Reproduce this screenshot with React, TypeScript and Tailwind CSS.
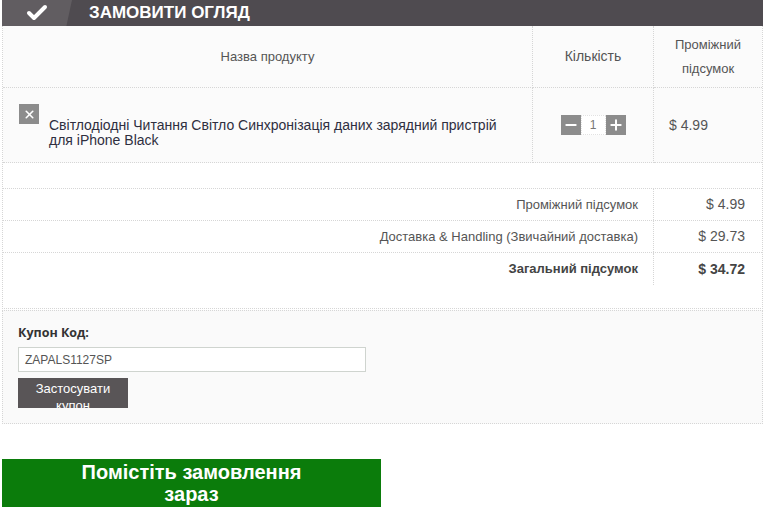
import { Check, Minus, Plus, X } from "lucide-react";

const totals = [
  { label: "Проміжний підсумок", value: "$ 4.99", bold: false },
  { label: "Доставка & Handling (Звичайний доставка)", value: "$ 29.73", bold: false },
  { label: "Загальний підсумок", value: "$ 34.72", bold: true },
];

export default function App() {
  return (
    <div className="min-h-screen w-[773px] bg-white font-['Liberation_Sans',Arial,sans-serif] text-[#555]">
      <div className="ml-[2px] w-[761px]">
        {/* header bar */}
        <div className="relative flex h-[26px] items-center bg-[#4f4b50]">
          <div className="absolute left-0 top-0 h-full w-[70px] bg-[#615d61] [clip-path:polygon(0_0,100%_0,92%_100%,0_100%)]" />
          <Check size={24} strokeWidth={4} className="relative ml-[23px] text-white" />
          <span className="relative ml-[40px] text-[17px] font-bold uppercase leading-[20px] text-white">
            Замовити огляд
          </span>
        </div>

        {/* cart box */}
        <div className="border-x border-b border-dotted border-[#d6d6d6]">
          <div className="grid grid-cols-[530px_121px_1fr] bg-[#fbfbfb] text-[13px]">
            <div className="flex h-[62px] items-center justify-center border-b border-r border-dotted border-[#d6d6d6]">
              Назва продукту
            </div>
            <div className="flex h-[62px] items-center justify-center border-b border-r border-dotted border-[#d6d6d6] text-[14px]">
              Кількість
            </div>
            <div className="flex h-[62px] items-center justify-center border-b border-dotted border-[#d6d6d6] text-center leading-[24px]">
              Проміжний
              <br />
              підсумок
            </div>

            <div className="flex h-[75px] items-start gap-[10px] border-b border-r border-dotted border-[#d6d6d6] pl-[16px] pt-[16px]">
              <div className="flex h-[20px] w-[20px] shrink-0 items-center justify-center bg-[#8c8c8c]">
                <X size={13} strokeWidth={3} className="text-white" />
              </div>
              <p className="mt-[14px] max-w-[460px] text-[14px] leading-[15px] text-[#2f2f3f]">
                Світлодіодні Читання Світло Синхронізація даних зарядний пристрій для iPhone Black
              </p>
            </div>
            <div className="flex h-[75px] items-center justify-center border-b border-r border-dotted border-[#d6d6d6] pb-[1px]">
              <div className="flex h-[20px] w-[20px] items-center justify-center bg-[#8c8c8c]">
                <Minus size={16} strokeWidth={3} className="text-white" />
              </div>
              <div className="flex h-[20px] w-[25px] items-center justify-center border border-dotted border-[#e2e2e2] bg-white text-[12px] text-[#777]">
                1
              </div>
              <div className="flex h-[20px] w-[20px] items-center justify-center bg-[#8c8c8c]">
                <Plus size={16} strokeWidth={3} className="text-white" />
              </div>
            </div>
            <div className="flex h-[75px] items-center border-b border-dotted border-[#d6d6d6] pl-[15px] text-[14px] text-[#555]">
              $ 4.99
            </div>
          </div>

          <div className="h-[25px]" />

          <div className="border-t border-dotted border-[#d6d6d6] pb-[23px] text-[13px]">
            {totals.map((t, i) => (
              <div
                key={t.label}
                className={`grid h-[32px] grid-cols-[651px_1fr] ${i < totals.length - 1 ? "border-b border-dotted border-[#d6d6d6]" : ""}`}
              >
                <div
                  className={`flex h-full items-center justify-end border-r border-dotted border-[#d6d6d6] pr-[15px] ${t.bold ? "font-bold text-[#444]" : ""}`}
                >
                  {t.label}
                </div>
                <div
                  className={`flex h-full items-center justify-end pr-[17px] text-[14px] ${t.bold ? "font-bold text-[#444]" : ""}`}
                >
                  {t.value}
                </div>
              </div>
            ))}
          </div>
        </div>

        {/* coupon */}
        <div className="mt-[1px] h-[114px] border border-dotted border-[#d6d6d6] bg-[#fafafa] px-[15px] pt-[14px]">
          <div className="font-['Open_Sans',sans-serif] text-[12.5px] font-bold leading-[16px] text-[#333]">Купон Код:</div>
          <div className="mt-[6px] flex h-[25px] w-[348px] items-center border border-[#cfd4cf] bg-white px-[6px] text-[12px] text-[#555]">
            ZAPALS1127SP
          </div>
          <div className="mt-[6px] h-[30px] w-[110px] overflow-hidden bg-[#595557] pt-[2px] text-center text-[13px] leading-[17px] text-white">
            Застосувати
            <br />
            купон
          </div>
        </div>

        {/* place order */}
        <div className="mt-[35px] flex h-[48px] w-[379px] items-center justify-center bg-[#0b7c0b] text-center text-[20px] font-bold leading-[22px] text-white">
          Помістіть замовлення
          <br />
          зараз
        </div>
      </div>
    </div>
  );
}
